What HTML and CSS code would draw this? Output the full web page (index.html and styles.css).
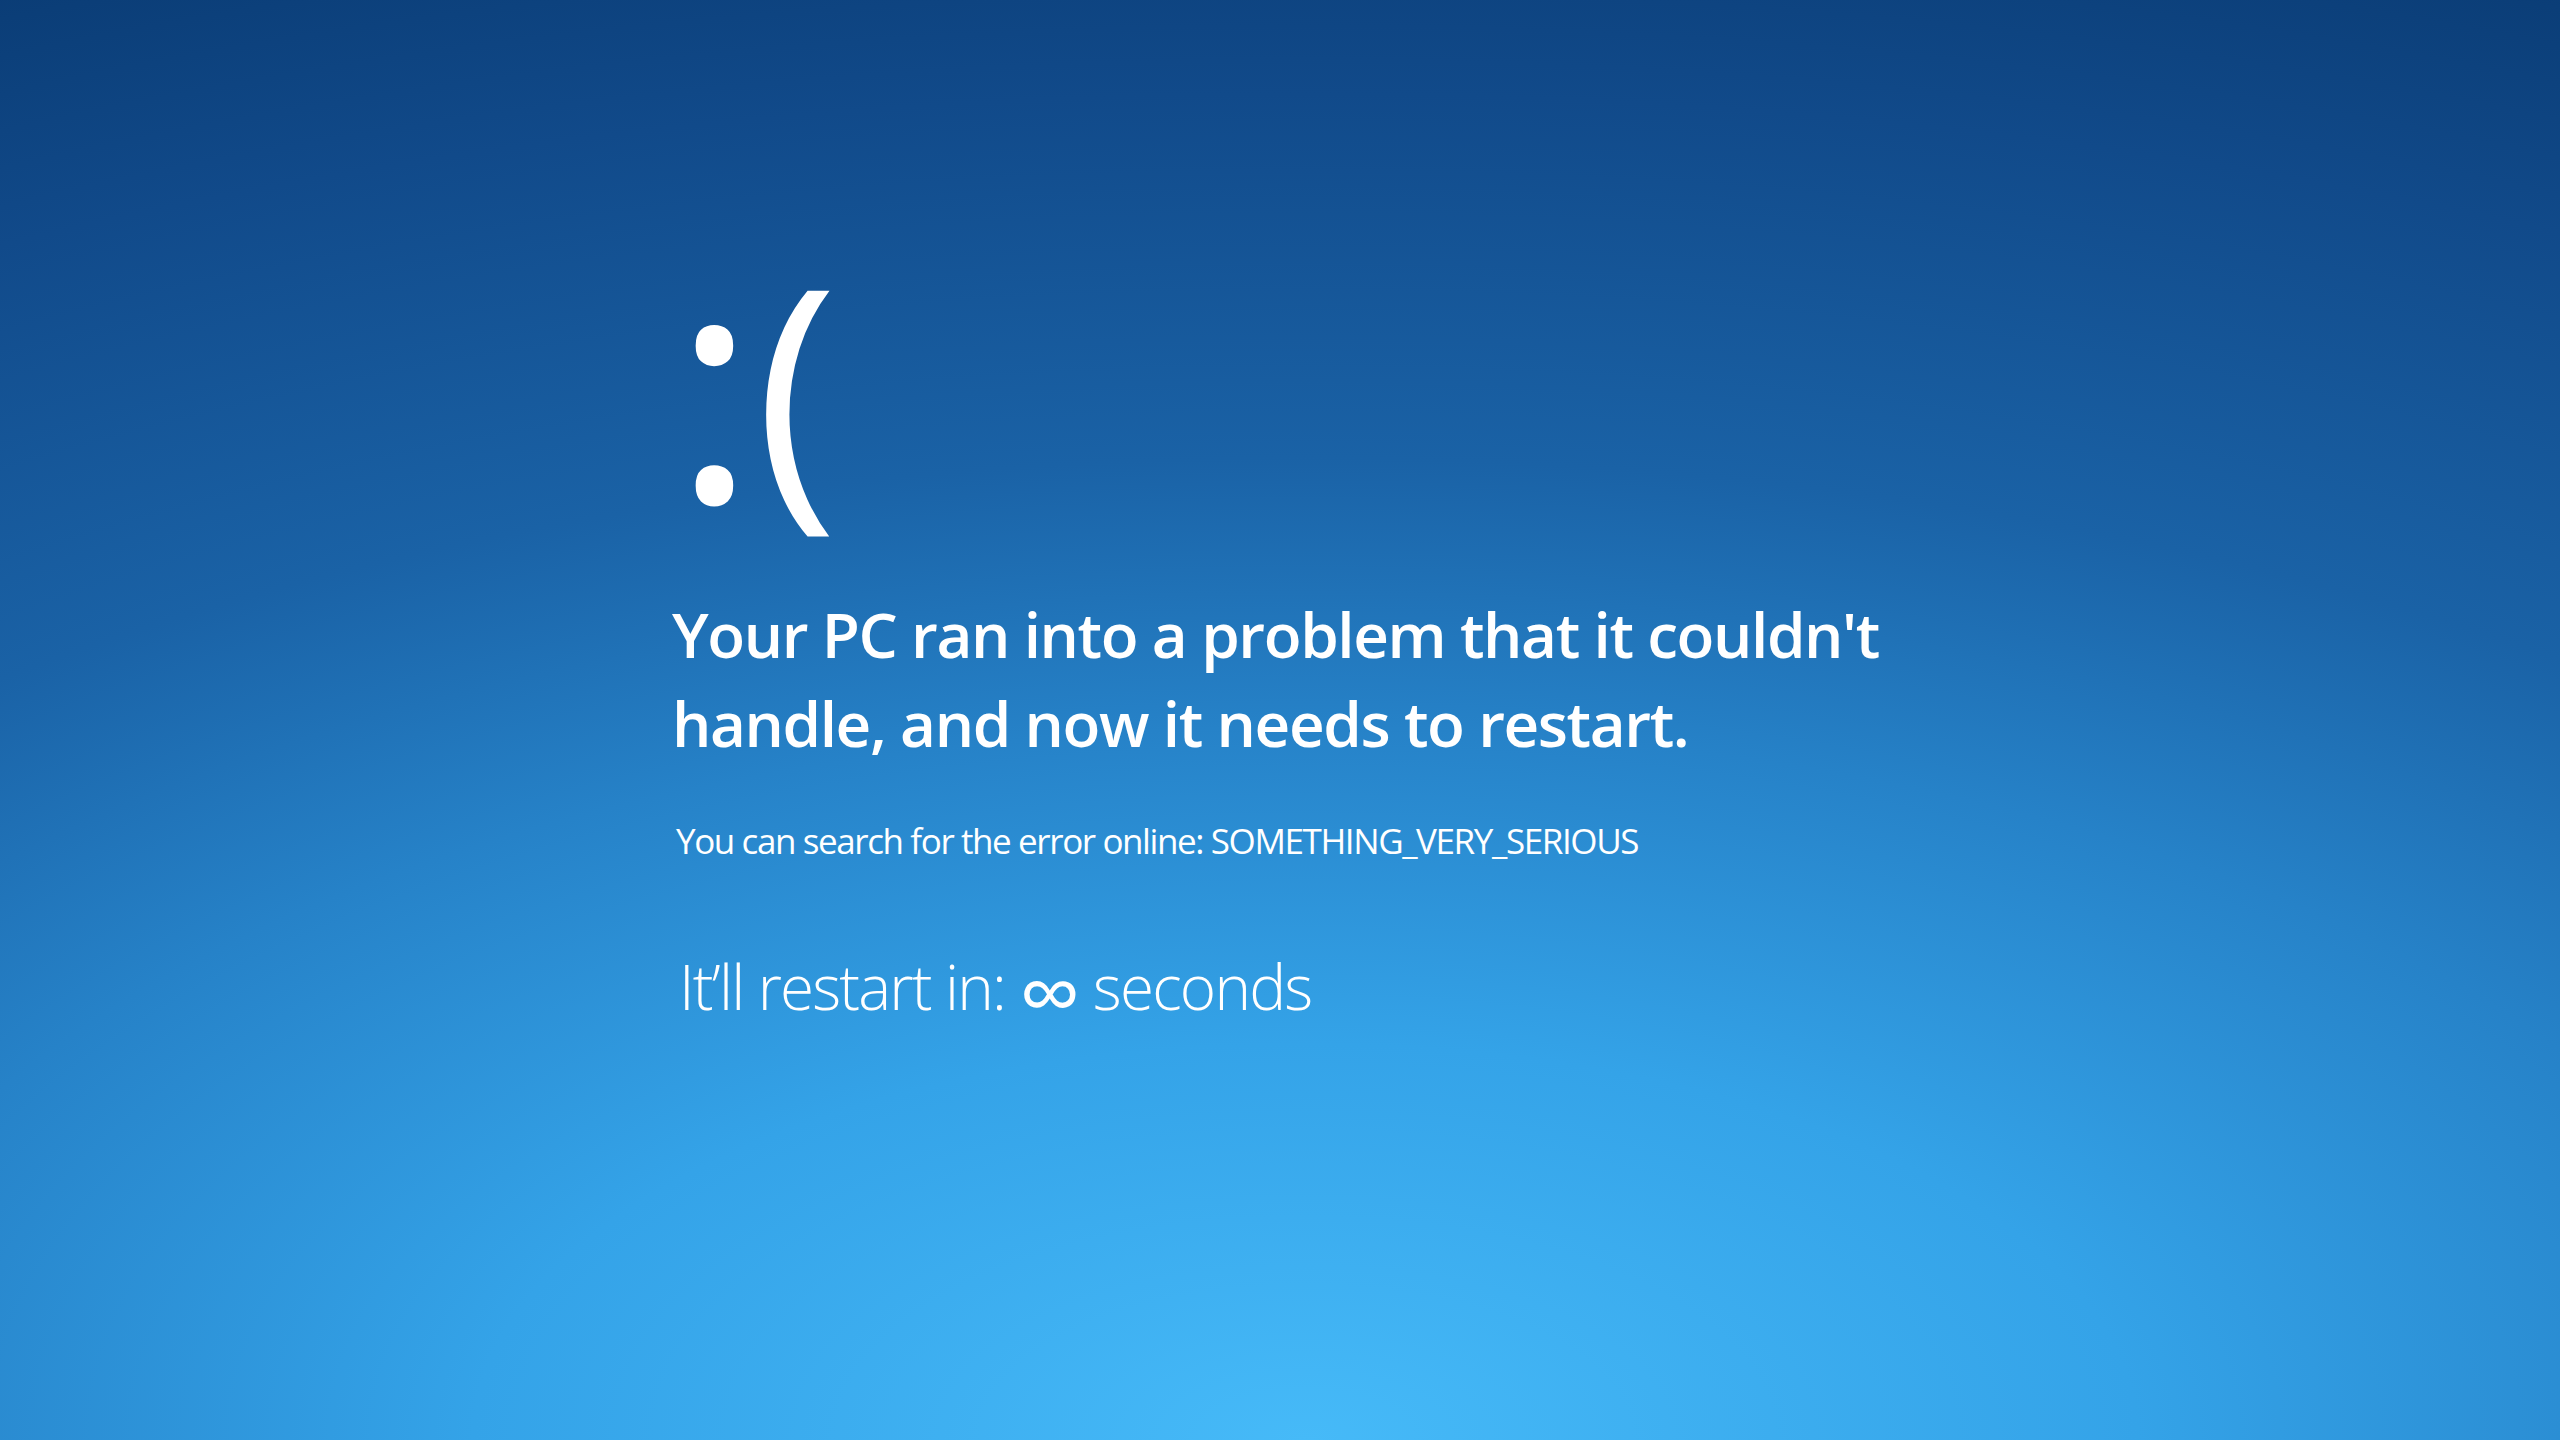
FILE: index.html
```html
<!DOCTYPE html>
<html lang="en">
  <head>
    <meta charset="UTF-8" />
    <title>Your PC ran into a problem</title>
    <link rel="stylesheet" href="styles.css">
  </head>
  <body>
    <div class="screen">
      <div class="content">
        <div class="face"><span class="eyes">:</span><span class="mouth">(</span></div>
        <h1 class="message">Your PC ran into a problem that it couldn't<br>handle, and now it needs to restart.</h1>
        <p class="search">You can search for the error online: SOMETHING_VERY_SERIOUS</p>
        <p class="restart">It’ll restart in: <span class="infinity">∞</span> seconds</p>
      </div>
    </div>
  </body>
</html>
```

FILE: styles.css
```css
*{
    box-sizing: border-box;
    margin: 0;
    padding: 0;
}
body{
    font-family: "Open Sans", "Noto Sans", sans-serif;
    color: #fff;
}
.screen{
    width: 100vw;
    height: 100vh;
    overflow: hidden;
    background: radial-gradient(ellipse 130% 110% at 51% 100%, #46baf8 0%, #34a3e8 25%, #2682c8 45%, #1a62a6 62%, #114a8a 85%, #0a3c75 100%);
}
.content{
    padding: 227px 0 0 672px;
    display: flex;
    flex-direction: column;
}
.face{
    font-size: 323px;
    line-height: 300px;
    height: 300px;
    white-space: nowrap;
}
.eyes{
    font-weight: 400;
}
.mouth{
    font-weight: 400;
    font-size: 282px;
    vertical-align: 10px;
    margin-left: -2px;
}
.message{
    font-weight: 600;
    font-size: 62px;
    line-height: 89px;
    letter-spacing: -1.4px;
    margin-top: 63px;
}
.search{
    font-weight: 400;
    font-size: 35px;
    letter-spacing: -1.4px;
    margin-top: 49px;
    margin-left: 4px;
}
.restart{
    font-weight: 300;
    font-size: 62px;
    letter-spacing: -1.8px;
    margin-top: 80px;
    margin-left: 7px;
}
.infinity{
    font-weight: 400;
    font-size: 1.4em;
    line-height: 0;
    vertical-align: -15px;
}
```
